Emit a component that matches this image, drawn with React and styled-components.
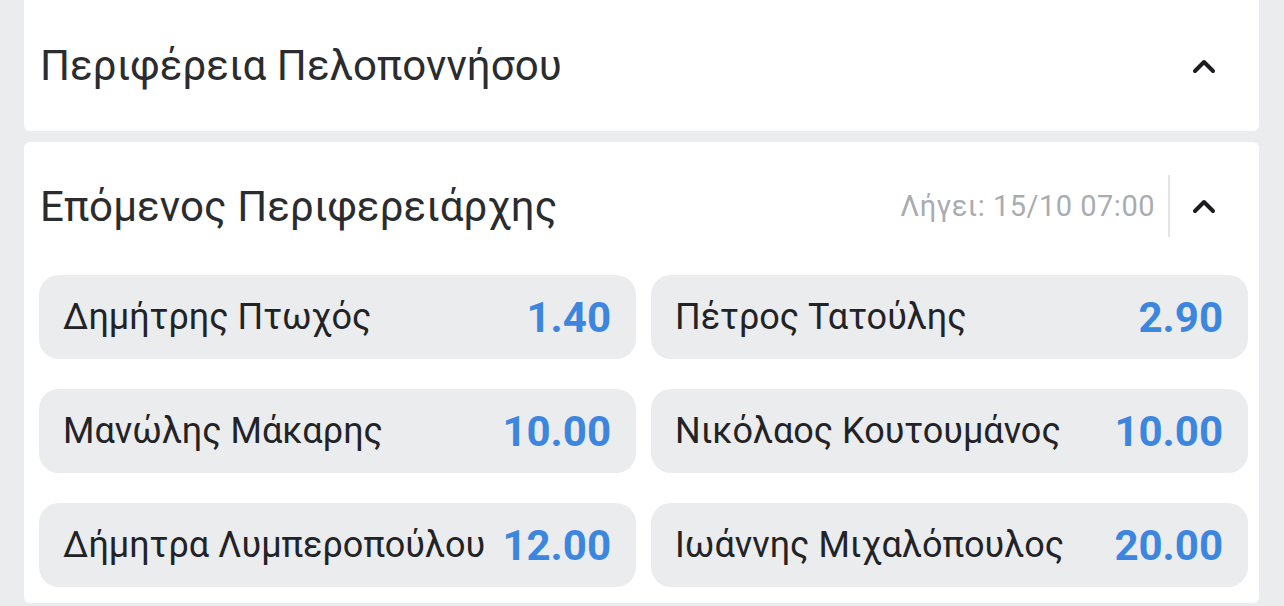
import React from "react";
import styled, { createGlobalStyle } from "styled-components";

const GlobalStyle = createGlobalStyle`
  html, body {
    margin: 0;
    padding: 0;
    background: #ebecee;
    font-family: Roboto, "Noto Sans", sans-serif;
  }
`;

const Page = styled.div`
  width: 1284px;
  height: 606px;
  overflow: hidden;
  padding: 0 25px 0 24px;
  box-sizing: border-box;
  display: flex;
  flex-direction: column;
  gap: 11px;
`;

const Card = styled.section`
  background: #ffffff;
  border-radius: ${(p) => (p.$top ? "0 0 6px 6px" : "6px")};
  padding: ${(p) => (p.$top ? "0 11px 0 15px" : "0 11px 16px 15px")};
`;

const Header = styled.div`
  height: ${(p) => p.$height}px;
  display: flex;
  align-items: center;
  padding-left: 1px;
`;

const Title = styled.h2`
  flex: 1;
  margin: 0;
  font-size: 42px;
  font-weight: 400;
  color: #2b2c30;
  letter-spacing: 0.1px;
`;

const Expires = styled.span`
  font-size: 29px;
  letter-spacing: 0.5px;
  color: #a9acb1;
  padding-right: 13px;
`;

const Divider = styled.span`
  width: 2px;
  height: 62px;
  background: #e3e4e7;
`;

const Toggle = styled.button`
  border: none;
  background: none;
  padding: 0 0 0 20px;
  width: 78px;
  height: 40px;
  display: flex;
  align-items: center;
  justify-content: flex-start;
  cursor: pointer;
`;

const Grid = styled.div`
  display: grid;
  grid-template-columns: 1fr 1fr;
  column-gap: 15px;
  row-gap: 30px;
  margin-top: 5px;
`;

const Outcome = styled.button`
  height: 84px;
  border: none;
  border-radius: 20px;
  background: #ebecee;
  display: flex;
  align-items: center;
  justify-content: space-between;
  padding: 0 25px 0 24px;
  font-family: inherit;
  cursor: pointer;
`;

const Name = styled.span`
  font-size: 36px;
  color: #222327;
  white-space: nowrap;
`;

const Odds = styled.span`
  font-size: 42px;
  font-weight: 700;
  color: #3c86e0;
`;

const Chevron = () => (
  <svg width="28" height="18" viewBox="0 0 28 18">
    <polyline
      points="5,14 14,5 23,14"
      fill="none"
      stroke="#1c1d21"
      strokeWidth="4"
      strokeLinecap="round"
      strokeLinejoin="round"
    />
  </svg>
);

const outcomes = [
  ["Δημήτρης Πτωχός", "1.40"],
  ["Πέτρος Τατούλης", "2.90"],
  ["Μανώλης Μάκαρης", "10.00"],
  ["Νικόλαος Κουτουμάνος", "10.00"],
  ["Δήμητρα Λυμπεροπούλου", "12.00"],
  ["Ιωάννης Μιχαλόπουλος", "20.00"],
];

export default function App() {
  return (
    <>
      <GlobalStyle />
      <Page>
        <Card $top>
          <Header $height={131}>
            <Title>Περιφέρεια Πελοποννήσου</Title>
            <Toggle>
              <Chevron />
            </Toggle>
          </Header>
        </Card>
        <Card>
          <Header $height={128}>
            <Title>Επόμενος Περιφερειάρχης</Title>
            <Expires>Λήγει: 15/10 07:00</Expires>
            <Divider />
            <Toggle>
              <Chevron />
            </Toggle>
          </Header>
          <Grid>
            {outcomes.map(([name, odds]) => (
              <Outcome key={name}>
                <Name>{name}</Name>
                <Odds>{odds}</Odds>
              </Outcome>
            ))}
          </Grid>
        </Card>
      </Page>
    </>
  );
}
